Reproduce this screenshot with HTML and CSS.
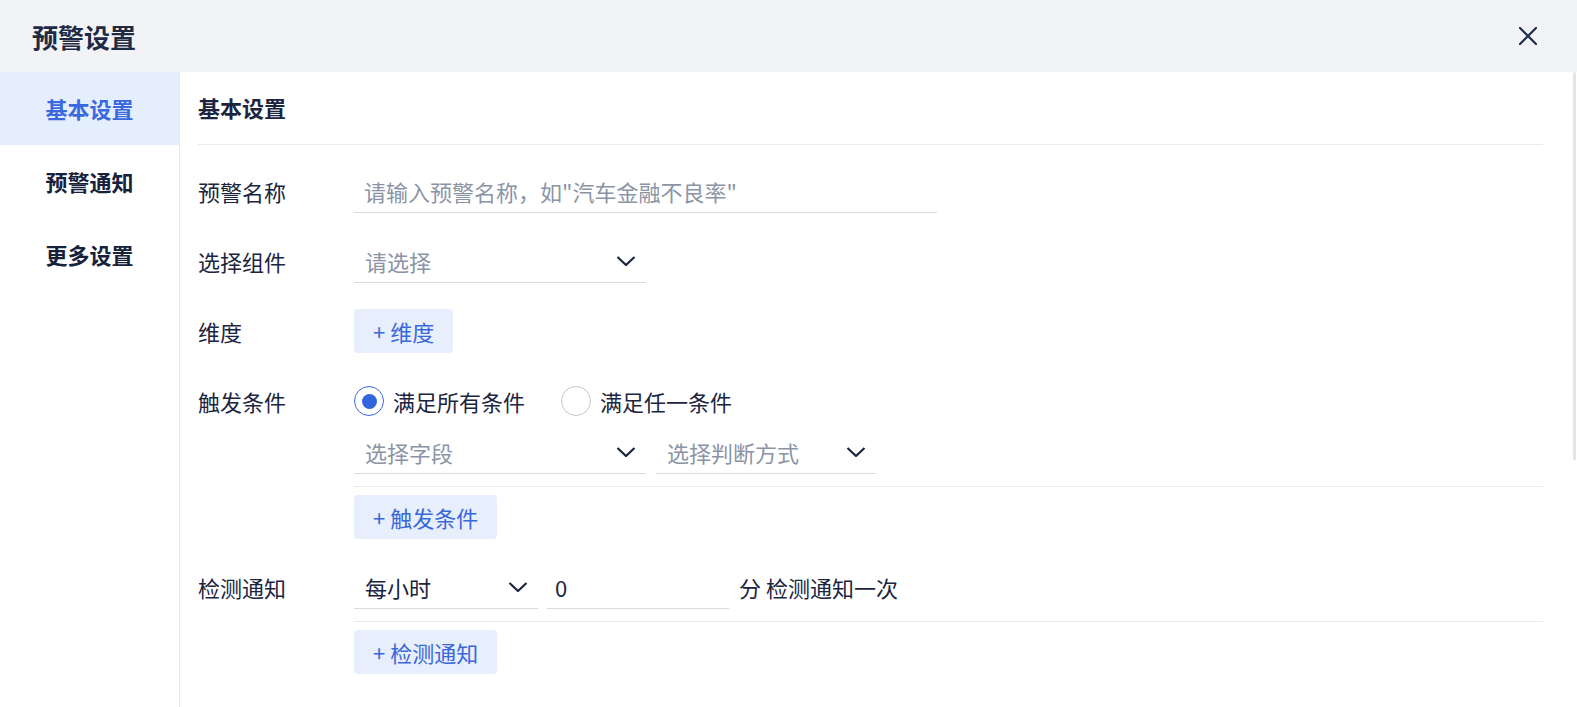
FILE: index.html
```html
<!DOCTYPE html>
<html>
    <head>
        <meta charset="utf-8">
        <title>预警设置</title>
        <link rel="stylesheet" href="styles.css">
    </head>
    <body>
        <div class="dialog">
            <header class="dialog-header">
                <h1>预警设置</h1>
                <button type="button" class="close-btn">
                    <svg viewBox="0 0 18 18" width="18" height="18"><path d="M1 1L17 17M17 1L1 17" stroke="#1e2a48" stroke-width="2.2" stroke-linecap="round" fill="none"/></svg>
                </button>
            </header>
            <div class="dialog-body">
                <ul class="side-nav">
                    <li class="active">基本设置</li>
                    <li>预警通知</li>
                    <li>更多设置</li>
                </ul>
                <div class="content">
                    <div class="scroll-thumb"></div>
                    <h2 class="section-title">基本设置</h2>
                    <div class="form">
                        <div class="form-item">
                            <div class="form-label">预警名称</div>
                            <div class="form-control">
                                <input class="text-input w-name" type="text" placeholder="请输入预警名称，如&quot;汽车金融不良率&quot;">
                            </div>
                        </div>
                        <div class="form-item">
                            <div class="form-label">选择组件</div>
                            <div class="form-control">
                                <div class="select w-component">
                                    <span>请选择</span>
                                    <svg viewBox="0 0 20 10"><polyline points="1.5,1 10,9 18.5,1" fill="none" stroke="#1b2540" stroke-width="2.2"/></svg>
                                </div>
                            </div>
                        </div>
                        <div class="form-item">
                            <div class="form-label">维度</div>
                            <div class="form-control">
                                <button type="button" class="add-btn">+ 维度</button>
                            </div>
                        </div>
                        <div class="form-item">
                            <div class="form-label">触发条件</div>
                            <div class="form-control">
                                <div class="radio-group">
                                    <label class="radio checked"><span class="radio-dot"></span>满足所有条件</label>
                                    <label class="radio"><span class="radio-dot"></span>满足任一条件</label>
                                </div>
                                <div class="row cond-row">
                                    <div class="select w-field">
                                        <span>选择字段</span>
                                        <svg viewBox="0 0 20 10"><polyline points="1.5,1 10,9 18.5,1" fill="none" stroke="#1b2540" stroke-width="2.2"/></svg>
                                    </div>
                                    <div class="select w-judge">
                                        <span>选择判断方式</span>
                                        <svg viewBox="0 0 20 10"><polyline points="1.5,1 10,9 18.5,1" fill="none" stroke="#1b2540" stroke-width="2.2"/></svg>
                                    </div>
                                </div>
                                <div class="divider"></div>
                                <button type="button" class="add-btn">+ 触发条件</button>
                            </div>
                        </div>
                        <div class="form-item">
                            <div class="form-label">检测通知</div>
                            <div class="form-control">
                                <div class="row">
                                    <div class="select filled w-freq">
                                        <span>每小时</span>
                                        <svg viewBox="0 0 20 10"><polyline points="1.5,1 10,9 18.5,1" fill="none" stroke="#1b2540" stroke-width="2.2"/></svg>
                                    </div>
                                    <input class="text-input w-minute" type="text" value="0">
                                    <span class="row-text">分 检测通知一次</span>
                                </div>
                                <div class="divider"></div>
                                <button type="button" class="add-btn">+ 检测通知</button>
                            </div>
                        </div>
                    </div>
                </div>
            </div>
        </div>
    </body>
</html>
```

FILE: styles.css
```css
* {
	box-sizing: border-box;
}
html, body {
	margin: 0;
	height: 100%;
}
body {
	font-family: "Noto Sans CJK SC", "Noto Sans", sans-serif;
	color: #1b2540;
	background: #fff;
}

/* dialog frame */
.dialog {
	display: flex;
	flex-direction: column;
	height: 100vh;
}
.dialog-header {
	flex: none;
	height: 72px;
	background: #f2f3f7;
	display: flex;
	align-items: center;
	justify-content: space-between;
	padding: 0 40px 0 32px;
}
.dialog-header h1 {
	margin: 0;
	font-size: 26px;
	font-weight: 700;
	color: #1f2a44;
}
.close-btn {
	display: block;
	width: 18px;
	height: 18px;
	padding: 0;
	border: 0;
	background: none;
	cursor: pointer;
}
.close-btn svg {
	display: block;
}
.dialog-body {
	flex: 1;
	display: flex;
	min-height: 0;
}

/* left menu */
.side-nav {
	flex: none;
	width: 180px;
	margin: 0;
	padding: 0;
	list-style: none;
	border-right: 1px solid #e6e8ee;
}
.side-nav li {
	height: 73px;
	line-height: 72px;
	text-align: center;
	font-size: 22px;
	font-weight: 700;
	color: #16213b;
}
.side-nav li.active {
	background: #e5eefd;
	color: #3a68df;
}

/* right panel */
.content {
	flex: 1;
	position: relative;
	padding: 0 34px 0 18px;
}
.scroll-thumb {
	position: absolute;
	top: 0;
	right: 1px;
	width: 3px;
	height: 388px;
	border-radius: 2px;
	background: #e4e5ea;
}
.section-title {
	margin: 0;
	height: 73px;
	line-height: 71px;
	border-bottom: 1px solid #e8eaf0;
	font-size: 22px;
	font-weight: 700;
}
.form {
	padding-top: 24px;
}
.form-item {
	display: flex;
	margin-bottom: 26px;
}
.form-label {
	flex: none;
	width: 156px;
	line-height: 44px;
	font-size: 22px;
}
.form-control {
	flex: 1;
	min-width: 0;
}

/* inputs */
.text-input {
	display: block;
	height: 44px;
	padding: 0 10px;
	border: 0;
	border-bottom: 1px solid #d8dbe2;
	background: transparent;
	font: inherit;
	font-size: 22px;
	color: #1b2540;
	outline: none;
}
.text-input::placeholder {
	color: #8b94a6;
}
.select {
	display: flex;
	align-items: center;
	justify-content: space-between;
	height: 44px;
	padding: 0 10px 0 11px;
	border-bottom: 1px solid #d8dbe2;
	font-size: 22px;
	color: #8b94a6;
}
.select.filled {
	color: #1b2540;
}
.select svg {
	flex: none;
	width: 20px;
	height: 10px;
}
.w-name { width: 583px; }
.w-component { width: 292px; }
.w-field { width: 292px; }
.w-judge { width: 220px; }
.w-freq { width: 184px; }
.w-minute { width: 182px; padding-left: 8px; }

.row {
	display: flex;
	align-items: center;
	gap: 10px;
}
.row .w-minute {
	margin-left: -1px;
}
.row-text {
	font-size: 22px;
}
.cond-row {
	margin-top: 7px;
}

/* radios */
.radio-group {
	display: flex;
	align-items: center;
	height: 44px;
	gap: 36px;
}
.radio {
	display: flex;
	align-items: center;
	gap: 9px;
	font-size: 22px;
}
.radio-dot {
	display: flex;
	align-items: center;
	justify-content: center;
	width: 30px;
	height: 30px;
	border-radius: 50%;
	border: 1px solid #c3c7d0;
}
.radio.checked .radio-dot {
	border-color: #3d6ae0;
}
.radio.checked .radio-dot::after {
	content: "";
	width: 15px;
	height: 15px;
	border-radius: 50%;
	background: #3366dd;
}

.divider {
	height: 1px;
	margin: 12px 0 8px;
	background: #e8eaf0;
}
.add-btn {
	display: block;
	height: 44px;
	padding: 0 19px;
	border: 0;
	border-radius: 4px;
	background: #e8effc;
	color: #3a67d9;
	font: inherit;
	font-size: 22px;
	cursor: pointer;
}
```
